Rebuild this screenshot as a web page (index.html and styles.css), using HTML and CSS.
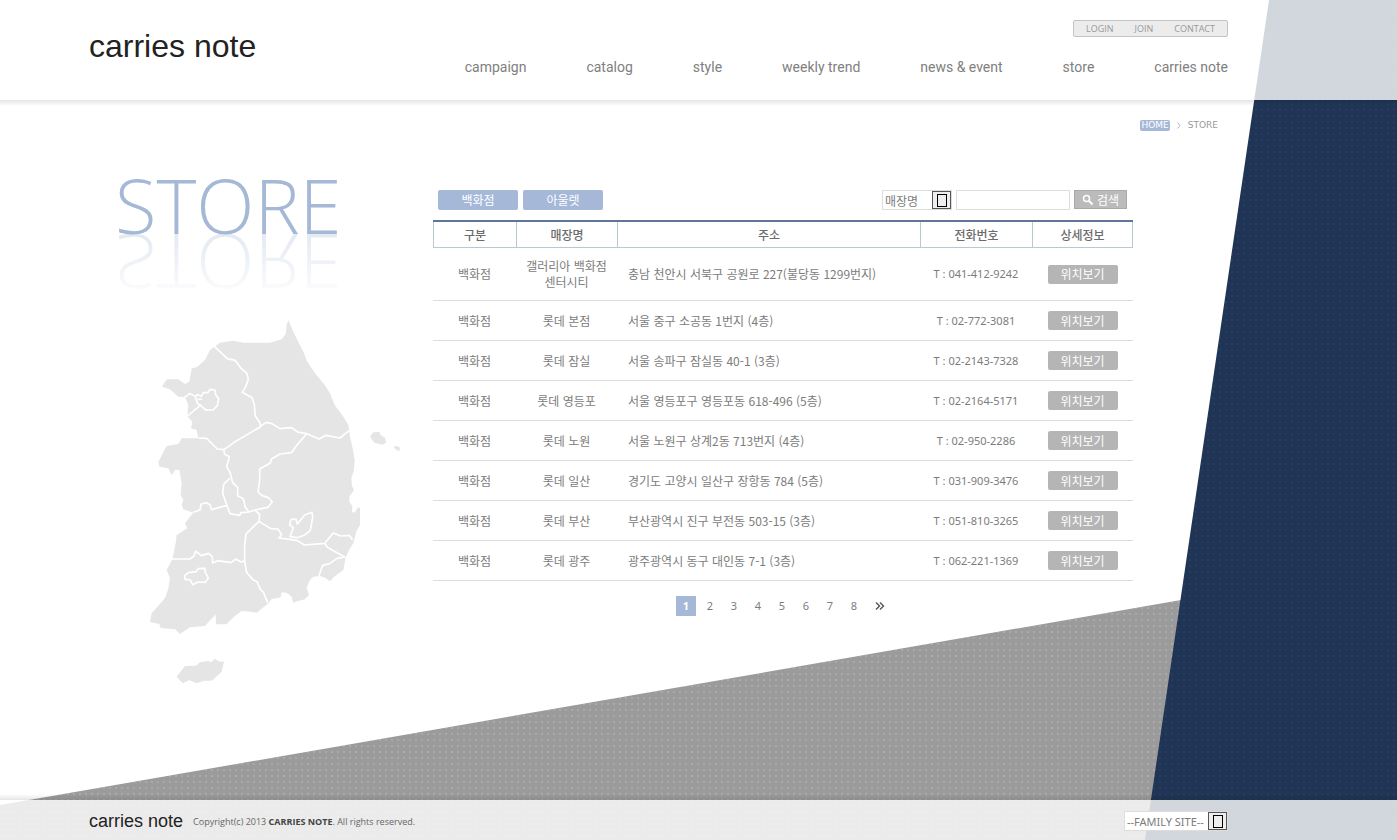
FILE: index.html
```html
<!DOCTYPE html>
<html lang="ko">
  <head>
    <meta charset="UTF-8" />
    <meta name="viewport" content="width=device-width, initial-scale=1.0" />
    <title>carries note - STORE</title>
    <link rel="stylesheet" href="styles.css">
  </head>
  <body>
    <svg class="bg" viewBox="0 0 1397 840" preserveAspectRatio="none" aria-hidden="true">
      <defs>
        <pattern id="dotsGray" width="6" height="6" patternUnits="userSpaceOnUse">
          <rect width="6" height="6" fill="#9b9b9b" />
          <rect x="1" y="1" width="2" height="2" fill="#aaa" />
        </pattern>
        <pattern id="dotsNavy" width="6" height="6" patternUnits="userSpaceOnUse">
          <rect width="6" height="6" fill="#203555" />
          <rect x="1" y="1" width="2" height="2" fill="#263d5e" />
        </pattern>
      </defs>
      <polygon points="0,805 1181,600 1181,840 0,840" fill="url(#dotsGray)" />
      <polygon points="1269,0 1397,0 1397,840 1145,840" fill="url(#dotsNavy)" />
    </svg>

    <header class="header">
      <a class="logo" href="#">carries note</a>
      <div class="menus">
        <ul class="util">
          <li><a href="#">LOGIN</a></li>
          <li><a href="#">JOIN</a></li>
          <li><a href="#">CONTACT</a></li>
        </ul>
        <nav class="gnb">
          <a href="#">campaign</a>
          <a href="#">catalog</a>
          <a href="#">style</a>
          <a href="#">weekly trend</a>
          <a href="#">news &amp; event</a>
          <a href="#">store</a>
          <a href="#">carries note</a>
        </nav>
      </div>
    </header>

    <main class="main">
      <div class="location">
        <a class="home" href="#">HOME</a>
        <svg width="4" height="7" viewBox="0 0 4 7"><path d="M0.5 0.5 L3 3.5 L0.5 6.5" fill="none" stroke="#a9b4c6" /></svg>
        <span>STORE</span>
      </div>

      <div class="content">
        <div class="side">
          <h1>STORE</h1>
          <svg class="map" viewBox="48 24 768 1104" role="img" aria-label="지도">
            <!-- land -->
            <g fill="#e5e5e5">
              <path d="M475 30 L490 65 L508 102 L521 127 L530 152 L555 190 L582 222 L600 250 L614 285 L640 320 L655 345 L660 380 L668 415 L674 450 L672 480 L664 505 L666 528 L672 540 L658 560 L658 575 L667 588 L666 606 L674 608 L682 595 L690 592 L690 645 L680 662 L670 700 L660 715 L647 742 L640 780 L615 798 L600 813 L585 803 L570 798 L550 800 L540 810 L530 832 L537 855 L525 868 L495 875 L490 880 L485 860 L470 848 L455 847 L452 862 L425 867 L415 880 L380 908 L335 902 L310 922 L290 943 L258 943 L257 913 L225 948 L180 952 L150 972 L135 958 L92 954 L88 942 L60 936 L65 910 L105 865 L115 835 L120 805 L110 780 L127 748 L137 700 L140 675 L172 655 L165 640 L190 608 L160 598 L155 585 L160 570 L152 555 L155 520 L148 480 L135 480 L125 496 L115 475 L88 470 L85 455 L110 408 L145 402 L155 385 L205 385 L200 360 L183 355 L187 335 L172 318 L175 285 L165 262 L145 260 L120 238 L96 230 L110 208 L145 208 L165 222 L178 215 L185 175 L200 172 L225 150 L240 120 L270 98 L310 92 L340 98 L420 98 L455 88 L467 72 L470 45 Z" />
              <path d="M140 1100 L165 1068 L198 1067 L210 1057 L235 1053 L243 1057 L256 1046 L265 1054 L282 1055 L275 1085 L245 1112 L222 1112 L200 1120 L178 1111 L158 1120 Z" />
              <path d="M720 380 L730 367 L748 366 L752 376 L766 384 L768 398 L758 404 L733 398 Z" />
              <path d="M791 411 L800 407 L810 413 L809 422 L800 421 Z" />
            </g>
            <!-- province borders -->
            <g fill="none" stroke="#fff" stroke-width="5" stroke-linejoin="round">
              <path d="M253 109 L292 146 L315 151 L333 175 L350 189 L355 208 L346 232 L337 247 L367 264 L373 285 L376 318 L388 335 L392 348 L410 337 L426 341 L450 356 L485 353 L503 366 L530 371 L568 387 L587 376 L630 384 L657 362" />
              <path d="M205 384 L230 385 L262 417 L282 419 L320 392 L392 350" />
              <path d="M530 371 L503 403 L484 428 L450 432 L424 447 L421 459 L389 477 L389 510 L384 546 L396 557 L415 563 L427 576 L413 592 L376 600 L357 606 L333 608 L329 616 L300 611 L292 590 L278 550 L281 523 L300 504" />
              <path d="M282 420 L283 432 L298 440 L290 470 L301 490 L308 518 L323 532 L323 557 L340 566 L346 592 L357 606" />
              <path d="M190 607 L210 600 L213 583 L228 578 L240 584 L245 599 L268 592 L290 587" />
              <path d="M376 601 L389 614 L387 634 L348 672 L344 705 L344 755 L350 788 L369 809 L381 815 L391 838 L400 846 L413 878" />
              <path d="M387 634 L422 656 L444 657 L455 674 L447 684 L500 691 L523 705 L584 700 L610 669 L632 678 L658 676 L668 690" />
              <path d="M584 700 L592 712 L644 741 L620 746 L599 761 L578 766 L567 797" />
              <path d="M126 747 L180 747 L191 739 L198 724 L214 737 L236 730 L247 740 L248 759 L263 752 L303 758 L318 747 L333 756 L344 753" />
              <path d="M163 263 L180 250 L196 260 L202 254 L214 259 L220 248 L234 248 L240 238 L255 240 L257 254 L266 266 L262 287 L249 300 L227 300 L211 286 L170 320 M196 260 L203 282 L214 286 M203 268 L216 267" />
              <path d="M480 680 L490 653 L479 645 L483 628 L498 628 L502 642 L524 615 L546 607 L548 622 L541 661 L526 674 L502 683 Z" />
              <path d="M164 797 L175 788 L198 785 L204 776 L225 775 L226 788 L235 804 L226 817 L204 816 L188 824 L181 810 L165 808 Z" />
            </g>
          </svg>
        </div>

        <section class="stores">
          <form class="toolbar">
            <button type="button" class="tab">백화점</button>
            <button type="button" class="tab">아울렛</button>
            <div class="search">
              <div class="select">
                <select aria-label="검색 조건">
                  <option>매장명</option>
                  <option>주소</option>
                </select>
                <span class="arrow"></span>
              </div>
              <input type="text" aria-label="검색어" />
              <button type="submit" class="btnSearch">
                <svg width="12" height="12" viewBox="0 0 12 12"><circle cx="4.5" cy="4.5" r="3" fill="none" stroke="#fff" stroke-width="1.5" /><path d="M6.8 6.8 L10.5 10.5" stroke="#fff" stroke-width="2" /></svg>
                검색
              </button>
            </div>
          </form>

          <table>
            <thead>
              <tr>
                <th class="colType">구분</th>
                <th class="colName">매장명</th>
                <th>주소</th>
                <th class="colTel">전화번호</th>
                <th class="colInfo">상세정보</th>
              </tr>
            </thead>
            <tbody>
              <tr class="tall">
                <td>백화점</td>
                <td>갤러리아 백화점 센터시티</td>
                <td class="addr">충남 천안시 서북구 공원로 227(불당동 1299번지)</td>
                <td class="tel">T : 041-412-9242</td>
                <td><button type="button" class="btnMap">위치보기</button></td>
              </tr>
              <tr>
                <td>백화점</td>
                <td>롯데 본점</td>
                <td class="addr">서울 중구 소공동 1번지 (4층)</td>
                <td class="tel">T : 02-772-3081</td>
                <td><button type="button" class="btnMap">위치보기</button></td>
              </tr>
              <tr>
                <td>백화점</td>
                <td>롯데 잠실</td>
                <td class="addr">서울 송파구 잠실동 40-1 (3층)</td>
                <td class="tel">T : 02-2143-7328</td>
                <td><button type="button" class="btnMap">위치보기</button></td>
              </tr>
              <tr>
                <td>백화점</td>
                <td>롯데 영등포</td>
                <td class="addr">서울 영등포구 영등포동 618-496 (5층)</td>
                <td class="tel">T : 02-2164-5171</td>
                <td><button type="button" class="btnMap">위치보기</button></td>
              </tr>
              <tr>
                <td>백화점</td>
                <td>롯데 노원</td>
                <td class="addr">서울 노원구 상계2동 713번지 (4층)</td>
                <td class="tel">T : 02-950-2286</td>
                <td><button type="button" class="btnMap">위치보기</button></td>
              </tr>
              <tr>
                <td>백화점</td>
                <td>롯데 일산</td>
                <td class="addr">경기도 고양시 일산구 장항동 784 (5층)</td>
                <td class="tel">T : 031-909-3476</td>
                <td><button type="button" class="btnMap">위치보기</button></td>
              </tr>
              <tr>
                <td>백화점</td>
                <td>롯데 부산</td>
                <td class="addr">부산광역시 진구 부전동 503-15 (3층)</td>
                <td class="tel">T : 051-810-3265</td>
                <td><button type="button" class="btnMap">위치보기</button></td>
              </tr>
              <tr>
                <td>백화점</td>
                <td>롯데 광주</td>
                <td class="addr">광주광역시 동구 대인동 7-1 (3층)</td>
                <td class="tel">T : 062-221-1369</td>
                <td><button type="button" class="btnMap">위치보기</button></td>
              </tr>
            </tbody>
          </table>

          <nav class="paging">
            <a class="on" href="#">1</a>
            <a href="#">2</a>
            <a href="#">3</a>
            <a href="#">4</a>
            <a href="#">5</a>
            <a href="#">6</a>
            <a href="#">7</a>
            <a href="#">8</a>
            <a class="next" href="#" aria-label="다음"><svg width="10" height="8" viewBox="0 0 10 8"><path d="M1 0.5 L4.5 4 L1 7.5 M5 0.5 L8.5 4 L5 7.5" fill="none" stroke="#555" stroke-width="1.4" /></svg></a>
          </nav>
        </section>
      </div>
    </main>

    <footer class="footer">
      <a class="logo" href="#">carries note</a>
      <p>Copyright(c) 2013 <strong>CARRIES NOTE</strong>. All rights reserved.</p>
      <div class="select family">
        <select aria-label="FAMILY SITE">
          <option>--FAMILY SITE--</option>
        </select>
        <span class="arrow"></span>
      </div>
    </footer>
  </body>
</html>
```
FILE: styles.css
```css
* {
  box-sizing: border-box;
}
body {
  margin: 0;
  min-height: 100vh;
  display: flex;
  flex-direction: column;
  position: relative;
  background: #fff;
  color: #7c7c7c;
  font-family: "Noto Sans CJK KR", sans-serif;
  font-size: 12px;
}
a {
  color: inherit;
  text-decoration: none;
}
button,
select,
input {
  font-family: inherit;
  font-size: 12px;
  margin: 0;
  padding: 0;
}
.bg {
  position: absolute;
  top: 0;
  left: 0;
  width: 100%;
  height: 100%;
  z-index: -1;
}

/* header */
.header {
  display: flex;
  justify-content: space-between;
  height: 100px;
  padding: 0 169px 0 89px;
  background: rgba(255, 255, 255, 0.8);
}
.logo {
  color: #222;
  font-family: "Liberation Sans", Arial, sans-serif;
}
.header .logo {
  padding-top: 28px;
  font-size: 32px;
  line-height: 36px;
}
.menus {
  display: flex;
  flex-direction: column;
  align-items: flex-end;
  padding-top: 20px;
}
.util {
  display: flex;
  gap: 21px;
  margin: 0;
  padding: 0 12px;
  list-style: none;
  border: 1px solid #c4c4c4;
  border-radius: 2px;
  background: #ececec;
  color: #999;
  font-family: "Open Sans", sans-serif;
  font-size: 9px;
  line-height: 15px;
}
.gnb {
  display: flex;
  gap: 60px;
  margin-top: 20px;
  color: #808080;
  font-family: Roboto, sans-serif;
  font-size: 14px;
  line-height: 20px;
}

/* main */
.main {
  flex: 1;
  background: linear-gradient(rgba(0, 0, 0, 0.1), rgba(0, 0, 0, 0)) top / 100% 6px no-repeat,
    linear-gradient(rgba(0, 0, 0, 0), rgba(0, 0, 0, 0.1)) bottom / 100% 6px no-repeat;
}
.location {
  display: flex;
  justify-content: flex-end;
  align-items: center;
  gap: 7px;
  padding: 20px 179px 0 0;
  color: #999;
  font-family: "DejaVu Sans", sans-serif;
  font-size: 9px;
  line-height: 11px;
}
.home {
  padding: 0 1px;
  border-radius: 2px;
  background: #a5b8d8;
  color: #fff;
}
.content {
  display: flex;
  padding: 45px 264px 0 115px;
}
.side {
  flex: 0 0 318px;
}
.side h1 {
  margin: 0;
  color: #a5b8d6;
  font-family: "Open Sans", sans-serif;
  font-size: 76px;
  font-weight: 300;
  line-height: 58px;
  -webkit-box-reflect: below 0 linear-gradient(transparent, rgba(0, 0, 0, 0.08) 10%, rgba(0, 0, 0, 0.3));
}
.map {
  display: block;
  width: 256px;
  margin: 84px 0 0 31px;
}

.stores {
  flex: 1;
  padding-top: 14px;
}
.toolbar {
  display: flex;
  gap: 5px;
  margin-bottom: 10px;
  padding: 0 6px 0 5px;
}
.tab {
  width: 80px;
  height: 20px;
  border: 0;
  border-radius: 2px;
  background: #a5b8d8;
  color: #fff;
  line-height: 18px;
}
.search {
  display: flex;
  gap: 4px;
  margin-left: auto;
}
.select {
  position: relative;
  width: 70px;
  height: 20px;
}
.select select {
  appearance: none;
  width: 100%;
  height: 100%;
  padding-left: 2px;
  border: 1px solid #ddd;
  border-radius: 0;
  background: #fff;
  color: #7c7c7c;
}
/* drop button with a hollow box on it */
.arrow {
  position: absolute;
  top: 1px;
  right: 1px;
  width: 19px;
  height: 18px;
  border: 1px solid #555;
  background: #eee;
  pointer-events: none;
}
.arrow::after {
  content: "";
  display: block;
  width: 8px;
  height: 11px;
  margin: 2px auto;
  border: 1px solid #000;
}
.search input {
  width: 114px;
  height: 20px;
  border: 1px solid #ddd;
}
.btnSearch {
  display: flex;
  align-items: center;
  justify-content: center;
  gap: 3px;
  width: 53px;
  height: 19px;
  border: 1px solid #aaa;
  background: #bbb;
  color: #fff;
}

table {
  width: 100%;
  table-layout: fixed;
  border-top: 2px solid #5f7599;
  border-spacing: 0;
}
th {
  height: 26px;
  padding: 0;
  border-left: 1px solid #b9c9d0;
  border-bottom: 1px solid #b9c9d0;
  color: #6c6c6c;
  font-weight: 500;
}
th:last-child {
  border-right: 1px solid #b9c9d0;
}
.colType {
  width: 83px;
}
.colName,
.colInfo {
  width: 101px;
}
.colTel {
  width: 112px;
}
td {
  height: 40px;
  padding: 0 9px;
  border-bottom: 1px solid #ddd;
  line-height: 16px;
  text-align: center;
  word-break: keep-all;
}
.tall td {
  height: 53px;
}
td.addr {
  padding-left: 11px;
  text-align: left;
}
td.tel {
  font-family: "Noto Sans", sans-serif;
  font-size: 11px;
}
.btnMap {
  display: block;
  width: 70px;
  height: 19px;
  margin: 0 auto;
  border: 0;
  border-radius: 2px;
  background: #b5b5b5;
  color: #fff;
  line-height: 18px;
}

.paging {
  display: flex;
  justify-content: center;
  gap: 4px;
  padding-top: 15px;
  font-family: "Noto Sans", sans-serif;
  font-size: 11px;
  line-height: 20px;
  text-align: center;
}
.paging a {
  width: 20px;
}
.paging .on {
  background: #a5b8d8;
  color: #fff;
  font-weight: bold;
}
.paging .next {
  margin-left: 2px;
}

/* footer */
.footer {
  display: flex;
  align-items: center;
  height: 40px;
  padding: 2px 169px 0 89px;
  background: rgba(255, 255, 255, 0.8);
}
.footer .logo {
  font-size: 18px;
}
.footer p {
  margin: 0 0 0 10px;
  color: #666;
  font-family: "Open Sans", sans-serif;
  font-size: 9px;
}
.footer strong {
  color: #444;
}
.family {
  width: 104px;
  margin-left: auto;
}
.family select {
  font-family: "Noto Sans", sans-serif;
  font-size: 11px;
}
```
